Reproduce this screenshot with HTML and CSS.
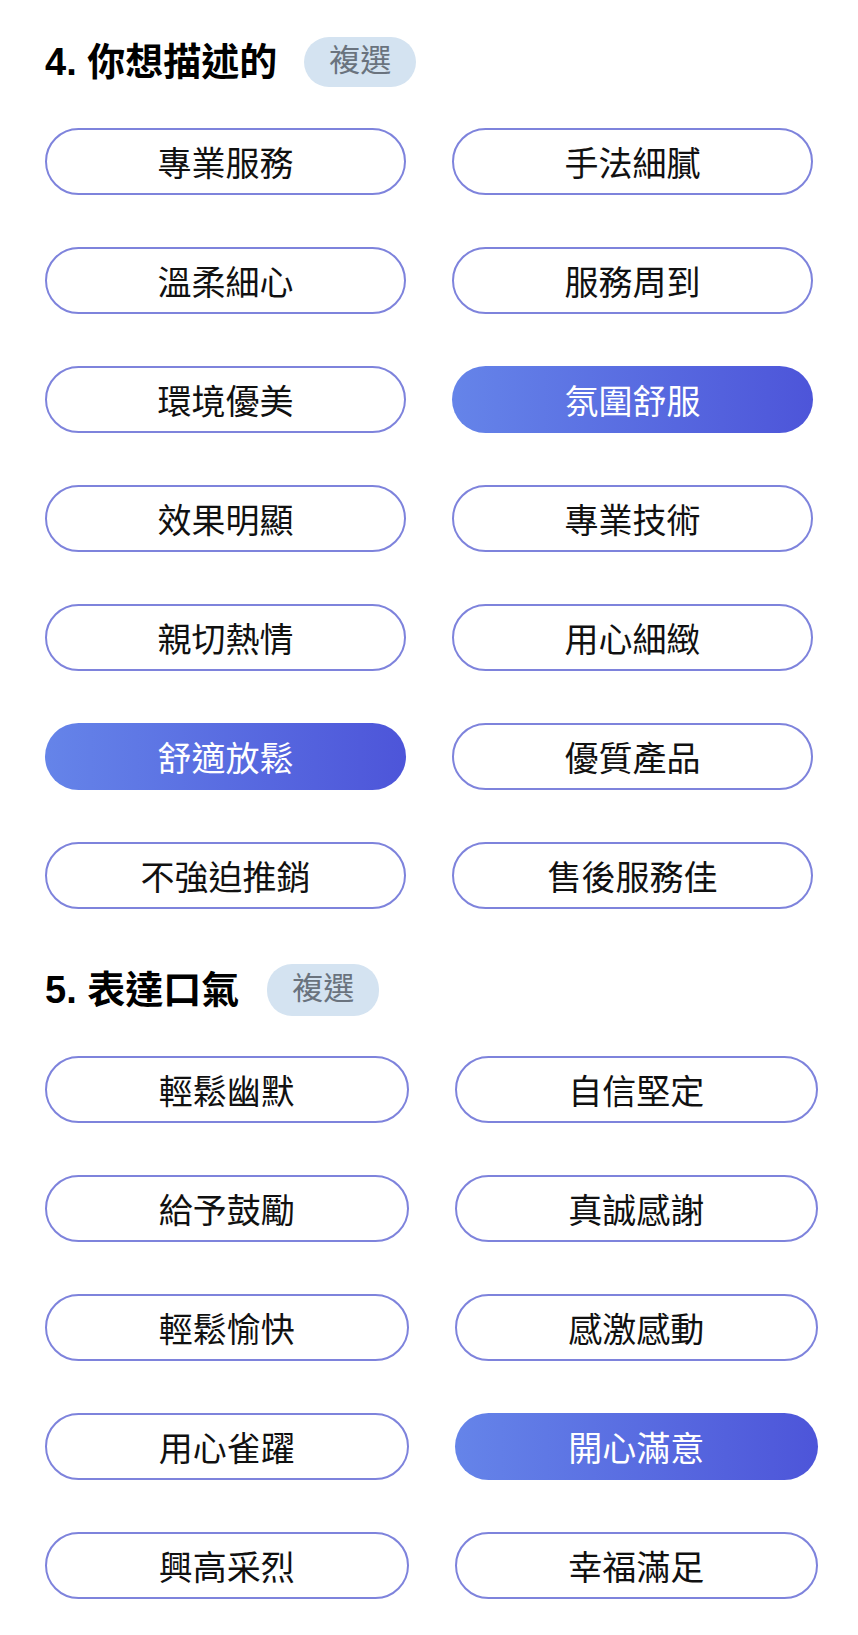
FILE: index.html
```html
<!DOCTYPE html>
<html>
<head>
	<meta charset="utf-8">
	<title>評價標籤</title>
	<link rel="stylesheet" href="styles.css">
</head>
<body>
	<div class="page">
		<div class="question">
			<div class="question-head">
				<h2 class="question-title">4. 你想描述的</h2>
				<span class="question-tag">複選</span>
			</div>
			<div class="options">
				<div class="option">專業服務</div>
				<div class="option">手法細膩</div>
				<div class="option">溫柔細心</div>
				<div class="option">服務周到</div>
				<div class="option">環境優美</div>
				<div class="option selected">氛圍舒服</div>
				<div class="option">效果明顯</div>
				<div class="option">專業技術</div>
				<div class="option">親切熱情</div>
				<div class="option">用心細緻</div>
				<div class="option selected">舒適放鬆</div>
				<div class="option">優質產品</div>
				<div class="option">不強迫推銷</div>
				<div class="option">售後服務佳</div>
			</div>
		</div>

		<div class="question question-tone">
			<div class="question-head">
				<h2 class="question-title">5. 表達口氣</h2>
				<span class="question-tag">複選</span>
			</div>
			<div class="options">
				<div class="option">輕鬆幽默</div>
				<div class="option">自信堅定</div>
				<div class="option">給予鼓勵</div>
				<div class="option">真誠感謝</div>
				<div class="option">輕鬆愉快</div>
				<div class="option">感激感動</div>
				<div class="option">用心雀躍</div>
				<div class="option selected">開心滿意</div>
				<div class="option">興高采烈</div>
				<div class="option">幸福滿足</div>
			</div>
		</div>
	</div>
</body>
</html>
```

FILE: styles.css
```css
body {
	margin: 0;
	background: #fff;
	font-family: "Liberation Sans", "Noto Sans CJK TC", sans-serif;
	color: #111;
}
.page {
	padding: 37px 45px 36px;
}
.question + .question {
	margin-top: 56px;
}
.question-head {
	display: flex;
	align-items: center;
	height: 50px;
	margin-bottom: 41px;
}
.question-title {
	margin: 0;
	font-size: 38px;
	font-weight: 700;
	line-height: 50px;
	color: #000;
}
.question-tag {
	margin-left: 27px;
	height: 50px;
	padding: 0 25px;
	border-radius: 25px;
	background: #d4e3f1;
	color: #6a737e;
	font-size: 31px;
	line-height: 48px;
}
.question-tone .question-tag {
	height: 52px;
	margin-left: 28px;
	line-height: 50px;
}
.options {
	display: grid;
	grid-template-columns: 1fr 1fr;
	column-gap: 46px;
	row-gap: 52px;
}
.question-tone .options {
	margin-right: -5px;
}
.option {
	box-sizing: border-box;
	height: 67px;
	border: 2px solid #7e83dc;
	border-radius: 34px;
	display: flex;
	align-items: center;
	justify-content: center;
	font-size: 34px;
	color: #111;
}
.option.selected {
	border: none;
	background: linear-gradient(90deg, #6584e9, #4d55d9);
	color: #fff;
}
```
